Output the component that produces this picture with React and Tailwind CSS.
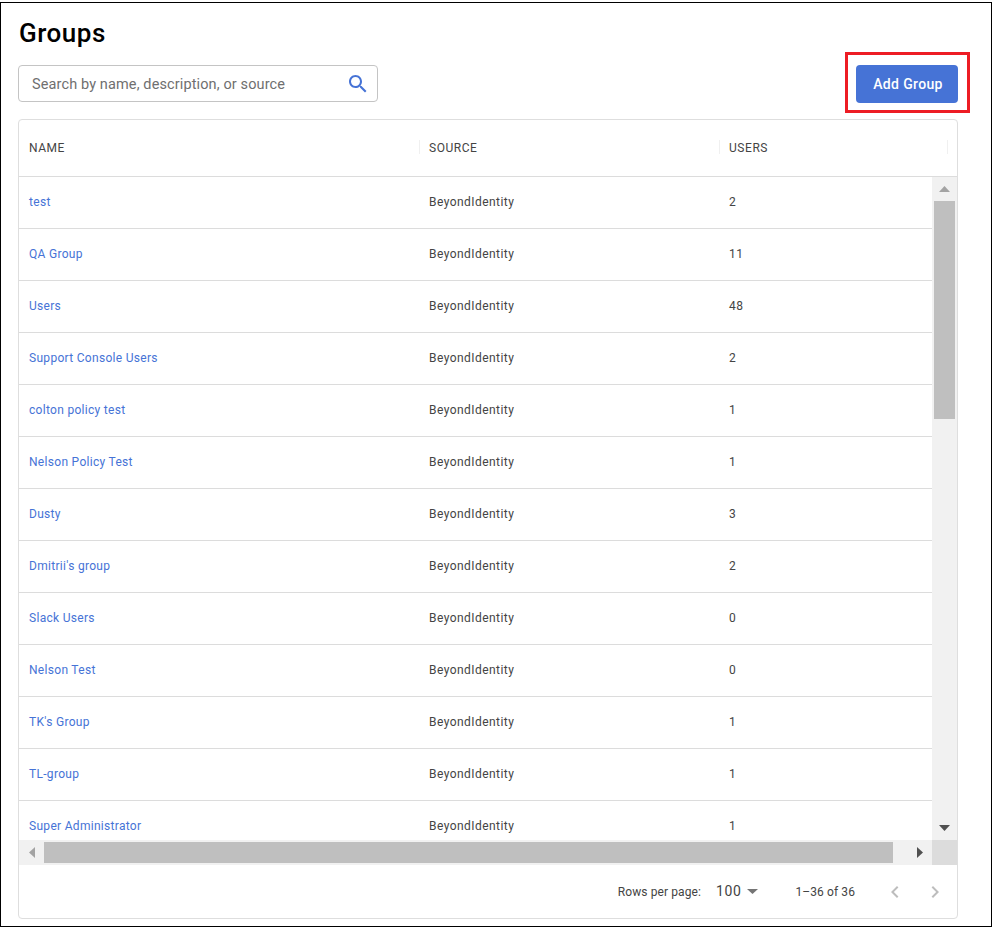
import React from "react";

const groups = [
    ["test", 2], ["QA Group", 11], ["Users", 48], ["Support Console Users", 2],
    ["colton policy test", 1], ["Nelson Policy Test", 1], ["Dusty", 3], ["Dmitrii's group", 2],
    ["Slack Users", 0], ["Nelson Test", 0], ["TK's Group", 1], ["TL-group", 1], ["Super Administrator", 1],
];

function Head({ label, width }) {
    return (
        <div className={ `flex items-center h-full pl-[10px] ${ width } relative` }>
            <span className="text-[12px] tracking-[0.55px] text-[#444444]">{ label }</span>
            <div className="absolute right-[-1px] top-[20px] h-[14px] w-px bg-[#f0f0f0]"></div>
        </div>
    )
}

export default function App() {
    return (
        <div className="bg-white min-h-[943px] pt-[2px]" style={{ fontFamily: "Roboto, 'Liberation Sans', sans-serif" }}>
            <div className="relative w-[992px] h-[925px] border border-black pl-[17px] pr-[33px]">
                <h1 className="pt-[13px] h-[62px] pl-px text-[26px] leading-[34px] font-medium tracking-[0.5px] text-black">Groups</h1>
                <div className="flex justify-between items-start h-[54px]">
                    <div className="w-[360px] h-[37px] border border-[#c4c4c4] rounded-[4px] flex items-center justify-between pl-[13px] pr-[7px]">
                        <span className="text-[14.5px] tracking-[0.12px] text-[#6f6f6f] pt-[2px]">Search by name, description, or source</span>
                        <svg width="24" height="24" viewBox="0 0 24 24" fill="#4673d6">
                            <path d="M15.5 14h-.79l-.28-.27C15.41 12.59 16 11.11 16 9.5 16 5.91 13.09 3 9.5 3S3 5.91 3 9.5 5.91 16 9.5 16c1.61 0 3.09-.59 4.23-1.57l.27.28v.79l5 4.99L20.49 19l-4.99-5zm-6 0C7.01 14 5 11.99 5 9.5S7.01 5 9.5 5 14 7.01 14 9.5 11.99 14 9.5 14z" />
                        </svg>
                    </div>
                    <button className="w-[102px] h-[38px] pl-[2px] rounded-[4px] bg-[#4673d6] text-white text-[14px] font-medium tracking-[0.35px]">Add Group</button>
                </div>
                <div className="h-[800px] w-[940px] border border-[#dedede] rounded-[4px] flex flex-col">
                    <div className="flex h-[56px] shrink-0 border-b border-[#dcdcdc] -mb-px box-content">
                        <Head label="NAME" width="w-[400px]" />
                        <Head label="SOURCE" width="w-[300px]" />
                        <Head label="USERS" width="w-[228px]" />
                    </div>
                    <div className="flex h-[663px] shrink-0 mt-px">
                        <div className="w-[913px] overflow-hidden">
                            { groups.map(([name, users]) => (
                                <div key={ name } className="flex items-center h-[52px] pb-[2px] border-b border-[#dcdcdc] text-[12px] tracking-[0.45px] text-[#444444]">
                                    <a className="w-[400px] pl-[10px] text-[#4673d6] tracking-[0.3px]">{ name }</a>
                                    <span className="w-[300px] pl-[10px]">BeyondIdentity</span>
                                    <span className="pl-[10px]">{ users }</span>
                                </div>
                            )) }
                        </div>
                        <div className="w-[25px] bg-[#f1f1f1] flex flex-col items-center">
                            <div className="h-[24px] flex items-center justify-center">
                                <svg width="11" height="6" viewBox="0 0 11 6"><path d="M5.5 0 L11 6 L0 6 Z" fill="#a3a3a3" /></svg>
                            </div>
                            <div className="w-[21px] h-[218px] bg-[#bfbfbf]"></div>
                            <div className="mt-auto h-[24px] flex items-center justify-center">
                                <svg width="11" height="6" viewBox="0 0 11 6"><path d="M0 0 L11 0 L5.5 6 Z" fill="#505050" /></svg>
                            </div>
                        </div>
                    </div>
                    <div className="flex h-[25px] shrink-0">
                        <div className="w-[913px] bg-[#f1f1f1] flex items-center">
                            <div className="w-[25px] flex justify-center">
                                <svg width="6" height="11" viewBox="0 0 6 11"><path d="M6 0 L6 11 L0 5.5 Z" fill="#a3a3a3" /></svg>
                            </div>
                            <div className="w-[849px] h-[21px] bg-[#bfbfbf]"></div>
                            <svg className="ml-[24px]" width="6" height="11" viewBox="0 0 6 11"><path d="M0 0 L6 5.5 L0 11 Z" fill="#505050" /></svg>
                        </div>
                        <div className="w-[25px] bg-[#dcdcdc]"></div>
                    </div>
                    <div className="flex-1 flex items-center justify-end text-[12px] tracking-[0.1px] text-[#444444]">
                        <span>Rows per page:</span>
                        <span className="ml-[15px] text-[14px] tracking-[0.6px]">100</span>
                        <svg className="ml-[6px]" width="11" height="5" viewBox="0 0 11 5"><path d="M0 0 L11 0 L5.5 5 Z" fill="#757575" /></svg>
                        <span className="ml-[37px] tracking-[0.1px]">1–36 of 36</span>
                        <svg className="ml-[28px]" width="24" height="24" viewBox="0 0 24 24" fill="#bdbdbd"><path d="M15.41 7.41 14 6l-6 6 6 6 1.41-1.41L10.83 12z" /></svg>
                        <svg className="ml-[16px] mr-[10px]" width="24" height="24" viewBox="0 0 24 24" fill="#bdbdbd"><path d="M10 6 8.59 7.41 13.17 12l-4.58 4.59L10 18l6-6z" /></svg>
                    </div>
                </div>
                <div className="absolute left-[844px] top-[49px] w-[125px] h-[61px] border-[3px] border-[#ed1c24]"></div>
            </div>
        </div>
    )
}
